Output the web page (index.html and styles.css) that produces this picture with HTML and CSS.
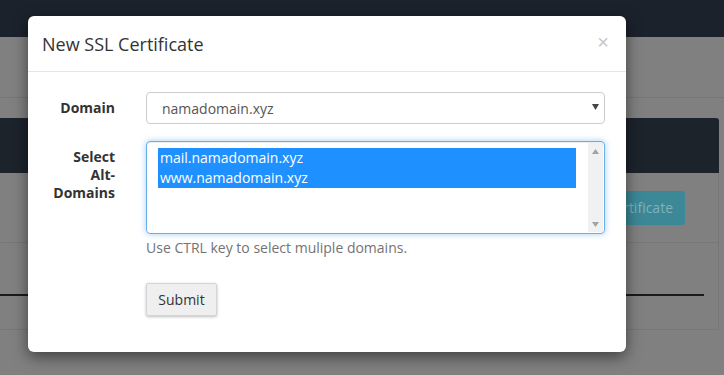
FILE: index.html
```html
<!DOCTYPE html>
<html lang="en">
<head>
<meta charset="utf-8">
<title>New SSL Certificate</title>
<link rel="stylesheet" href="styles.css">
</head>
<body>
<div class="page">
  <div class="nav"></div>
  <div class="subhead"></div>
  <div class="band"></div>
  <div class="toolbar"><span class="btn-info">New Certificate</span></div>
  <div class="panel">
    <div class="rule"></div>
  </div>
</div>

<div class="modal">
  <div class="modal-header">
    <h4 class="modal-title">New SSL Certificate</h4>
    <span class="close">&times;</span>
  </div>
  <form class="modal-body">
    <label class="label">Domain</label>
    <div class="select">
      <span class="select-value">namadomain.xyz</span>
      <svg class="caret" width="7" height="6" viewBox="0 0 7 6"><path d="M0 0H7L3.5 6Z" fill="#444"/></svg>
    </div>

    <label class="label">Select Alt-Domains</label>
    <div class="control">
      <div class="multi">
        <div class="options">
          <div class="option selected">mail.namadomain.xyz</div>
          <div class="option selected">www.namadomain.xyz</div>
        </div>
        <div class="scrollbar">
          <svg width="7" height="5" viewBox="0 0 7 5"><path d="M0 5H7L3.5 0Z" fill="#a3a3a3"/></svg>
          <svg width="7" height="5" viewBox="0 0 7 5"><path d="M0 0H7L3.5 5Z" fill="#a3a3a3"/></svg>
        </div>
      </div>
      <p class="help">Use CTRL key to select muliple domains.</p>
      <button type="button" class="submit">Submit</button>
    </div>
  </form>
</div>
</body>
</html>
```

FILE: styles.css
```css
html, body {
  margin: 0;
  padding: 0;
}
body {
  width: 724px;
  height: 375px;
  overflow: hidden;
  background: #808080;
  font-family: "Open Sans", "Liberation Sans", sans-serif;
  position: relative;
}

/* dimmed page behind the modal */
.page {
  display: flex;
  flex-direction: column;
}
.nav {
  height: 37px;
  background: #1b222b;
}
.subhead {
  height: 60px;
  border-bottom: 1px solid #767676;
}
.band {
  margin-top: 20px;
  height: 55px;
  margin-right: 5px;
  background: #1c232b;
  border-radius: 0 3px 0 0;
}
.toolbar {
  display: flex;
  justify-content: flex-end;
  padding: 18px 33px 0 0;
  box-sizing: border-box;
  height: 70px;
  margin-right: 5px;
  border-bottom: 1px solid #777;
  border-right: 1px solid #777;
}
.btn-info {
  height: 34px;
  line-height: 34px;
  padding: 0 12px;
  background: #3c8896;
  color: #7fb2bb;
  border-radius: 3px;
  font-size: 14px;
}
.panel {
  height: 87px;
  margin-right: 5px;
  border-right: 1px solid #777;
  border-bottom: 1px solid #777;
  padding-top: 51px;
  box-sizing: border-box;
}
.rule {
  height: 2px;
  background: #1a1a1a;
  margin-right: 14px;
}

/* modal */
.modal {
  position: absolute;
  left: 28px;
  top: 16px;
  width: 598px;
  height: 336px;
  background: #fff;
  border-radius: 6px;
  box-shadow: 0 5px 15px rgba(0, 0, 0, 0.5);
}
.modal-header {
  position: relative;
  padding: 15px 14px 14px;
  border-bottom: 1px solid #e5e5e5;
}
.modal-title {
  margin: 0;
  font-size: 18px;
  font-weight: 400;
  line-height: 26px;
  color: #333;
}
.close {
  position: absolute;
  right: 17px;
  top: 15px;
  font-size: 20px;
  line-height: 22px;
  color: #c6c6c6;
  font-family: "Liberation Sans", sans-serif;
}
.modal-body {
  display: grid;
  grid-template-columns: 87px 1fr;
  column-gap: 31px;
  row-gap: 17px;
  padding: 20px 21px 0 0;
  margin: 0;
}
.label {
  padding: 7px 0 0 23px;
  text-align: right;
  font-weight: 700;
  font-size: 14px;
  line-height: 18px;
  color: #333;
}
.select {
  height: 32px;
  box-sizing: border-box;
  border: 1px solid #ccc;
  border-radius: 4px;
  display: flex;
  align-items: center;
  justify-content: space-between;
  padding: 0 5px 0 15px;
  color: #555;
  font-size: 14px;
}
.caret {
  margin-top: -2px;
}
.control {
  display: flex;
  flex-direction: column;
  align-items: flex-start;
}
.multi {
  align-self: stretch;
  height: 93px;
  box-sizing: border-box;
  border: 1px solid #66afe9;
  border-radius: 4px;
  box-shadow: inset 0 1px 1px rgba(0, 0, 0, 0.075), 0 0 6px rgba(102, 175, 233, 0.6);
  display: flex;
  padding: 6px 1px 1px 11px;
}
.options {
  flex: 1;
  padding-right: 12px;
}
.option {
  height: 20px;
  line-height: 20px;
  font-size: 14px;
  padding-left: 2px;
  color: #555;
}
.option.selected {
  background: #1e90ff;
  color: #fff;
}
.scrollbar {
  width: 15px;
  margin-top: -5px;
  background: #f1f1f1;
  display: flex;
  flex-direction: column;
  justify-content: space-between;
  align-items: center;
  padding: 6px 0 5px;
  box-sizing: border-box;
}
.help {
  margin: 4px 0 0;
  font-size: 14px;
  line-height: 20px;
  color: #737373;
}
.submit {
  margin-top: 25px;
  width: 71px;
  height: 33px;
  background: #efefef;
  border: 1px solid #d4d4d4;
  border-radius: 2px;
  box-shadow: 0 1px 3px rgba(0, 0, 0, 0.25);
  font-family: "Open Sans", "Liberation Sans", sans-serif;
  font-size: 14px;
  color: #333;
  padding: 0;
}
```
